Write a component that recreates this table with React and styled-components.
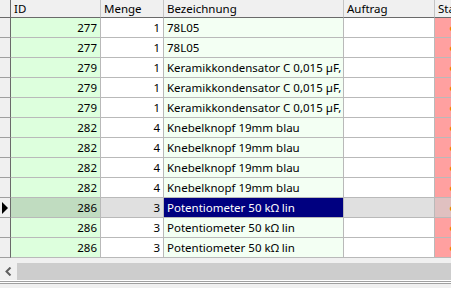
import React from 'react'
import styled, { createGlobalStyle } from 'styled-components'

const Global = createGlobalStyle`
  html, body {
    margin: 0;
    padding: 0;
    background: #f0f0f0;
    overflow: hidden;
  }
  body {
    font-family: "Noto Sans", "Open Sans", sans-serif;
    font-size: 11.5px;
    color: #000;
  }
`

const Frame = styled.div`
  width: 451px;
  height: 288px;
  overflow: hidden;
  display: flex;
  flex-direction: column;
  background: #f0f0f0;
`

const Grid = styled.div`
  display: flex;
  flex-direction: column;
  width: 451px;
  overflow: hidden;
`

const Row = styled.div`
  display: flex;
  height: ${p => (p.$head ? 18 : 20)}px;
  flex-shrink: 0;
`

const widths = [11, 90, 63, 180, 91, 120]

const RowHead = styled.div`
  width: 11px;
  flex-shrink: 0;
  box-sizing: border-box;
  background: #f0f0f0;
  border-right: 1px solid #6a6a6a;
  border-bottom: 1px solid ${p => (p.$head ? '#6a6a6a' : '#a0a0a0')};
  display: flex;
  align-items: center;
  padding-left: 2px;
`

const HeadCell = styled.div`
  width: ${p => p.$w}px;
  flex-shrink: 0;
  box-sizing: border-box;
  background: #f0f0f0;
  border-right: 1px solid #c4c4c4;
  border-bottom: 1px solid #6a6a6a;
  padding-left: 3px;
  line-height: 17px;
  white-space: nowrap;
  overflow: hidden;
`

const Cell = styled.div`
  width: ${p => p.$w}px;
  flex-shrink: 0;
  box-sizing: border-box;
  background: ${p => p.$bg};
  color: ${p => p.$fg || '#000'};
  border-right: 1px solid #b9b9b9;
  border-bottom: 1px solid #b9b9b9;
  text-align: ${p => (p.$right ? 'right' : 'left')};
  padding: 0 3px;
  padding-left: ${p => (p.$pl != null ? p.$pl : 3)}px;
  line-height: 19px;
  white-space: nowrap;
  overflow: hidden;
`

const Gap = styled.div`
  height: 5px;
  flex-shrink: 0;
`

const ScrollBar = styled.div`
  display: flex;
  height: 17px;
  flex-shrink: 0;
`

const ArrowBtn = styled.div`
  width: 17px;
  background: #f0f0f0;
  display: flex;
  align-items: center;
  justify-content: center;
`

const Thumb = styled.div`
  flex: 1;
  background: #cdcdcd;
`

const Line = styled.div`
  height: 1px;
  background: ${p => p.$c};
  flex-shrink: 0;
`

const data = [
  ['277', '1', '78L05'],
  ['277', '1', '78L05'],
  ['279', '1', 'Keramikkondensator C 0,015 µF, 50 V'],
  ['279', '1', 'Keramikkondensator C 0,015 µF, 50 V'],
  ['279', '1', 'Keramikkondensator C 0,015 µF, 50 V'],
  ['282', '4', 'Knebelknopf 19mm blau'],
  ['282', '4', 'Knebelknopf 19mm blau'],
  ['282', '4', 'Knebelknopf 19mm blau'],
  ['282', '4', 'Knebelknopf 19mm blau'],
  ['286', '3', 'Potentiometer 50 kΩ lin'],
  ['286', '3', 'Potentiometer 50 kΩ lin'],
  ['286', '3', 'Potentiometer 50 kΩ lin'],
]

const SELECTED = 9

export default function App() {
  return (
    <Frame>
      <Global />
      <Grid>
        <Row $head>
          <RowHead $head />
          <HeadCell $w={widths[1]}>ID</HeadCell>
          <HeadCell $w={widths[2]}>Menge</HeadCell>
          <HeadCell $w={widths[3]}>Bezeichnung</HeadCell>
          <HeadCell $w={widths[4]}>Auftrag</HeadCell>
          <HeadCell $w={widths[5]}>Status</HeadCell>
        </Row>
        {data.map((r, i) => {
          const sel = i === SELECTED
          return (
            <Row key={i}>
              <RowHead>
                {sel && (
                  <svg width="7" height="12" viewBox="0 0 7 12">
                    <path d="M0 0 L6 6 L0 12 Z" fill="#000" />
                  </svg>
                )}
              </RowHead>
              <Cell $w={widths[1]} $right $bg={sel ? '#c0dcc0' : '#ddffdd'}>{r[0]}</Cell>
              <Cell $w={widths[2]} $right $bg={sel ? '#e0e0e0' : '#ffffff'}>{r[1]}</Cell>
              <Cell $w={widths[3]} $bg={sel ? '#000080' : '#f3fff3'} $fg={sel ? '#fff' : '#000'}>{r[2]}</Cell>
              <Cell $w={widths[4]} $bg={sel ? '#e0e0e0' : '#ffffff'} />
              <Cell $w={widths[5]} $pl={14} $bg={sel ? '#e0c0c0' : '#ffa0a0'} $fg="#f08000">●</Cell>
            </Row>
          )
        })}
      </Grid>
      <Gap />
      <ScrollBar>
        <ArrowBtn>
          <svg width="7" height="9" viewBox="0 0 7 9">
            <path d="M5.5 0.5 L1.5 4.5 L5.5 8.5" fill="none" stroke="#606060" strokeWidth="2" />
          </svg>
        </ArrowBtn>
        <Thumb />
      </ScrollBar>
      <Line $c="#ffffff" />
      <Line $c="#a0a0a0" />
      <Line $c="#ffffff" />
      <Line $c="#a0a0a0" />
    </Frame>
  )
}
